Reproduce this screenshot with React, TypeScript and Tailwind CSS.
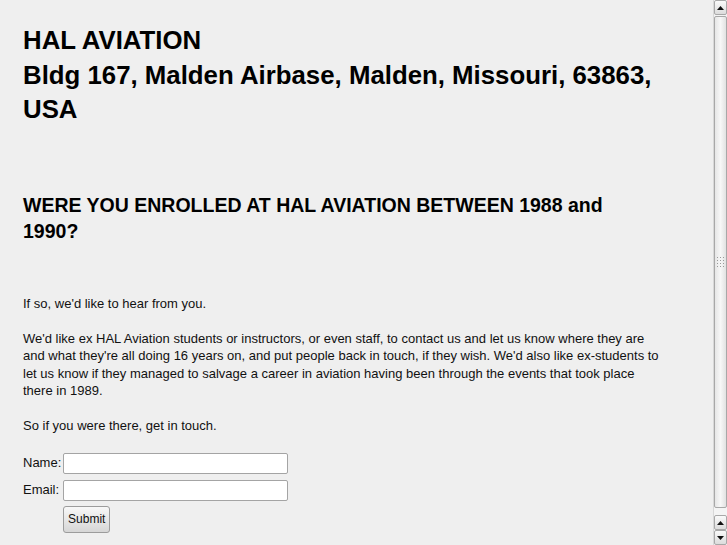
import React from 'react';

const Scrollbar: React.FC = () => {
  return (
    <div className="w-[14px] h-full flex flex-col bg-[#f4f4f4] border-l border-[#d8d8d8]">
      <div className="h-[15px] flex items-center justify-center bg-gradient-to-b from-[#fafafa] to-[#dcdcdc] border border-[#a8a8a8] rounded-[2px]">
        <svg width="7" height="4" viewBox="0 0 7 4"><path d="M0 4 L3.5 0 L7 4 Z" fill="#111" /></svg>
      </div>
      <div className="h-[492px] flex items-center justify-center bg-gradient-to-r from-[#e6e6e6] via-[#f7f7f7] to-[#e2e2e2] border border-[#a8a8a8] rounded-[2px] mt-px">
        <div className="grid grid-cols-3 gap-[2px]">
          {Array.from({ length: 12 }).map((_, i) => (
            <span key={i} className="w-px h-px bg-[#9a9a9a]" />
          ))}
        </div>
      </div>
      <div className="flex-1" />
      <div className="h-[15px] flex items-center justify-center bg-gradient-to-b from-[#fafafa] to-[#dcdcdc] border border-[#a8a8a8] rounded-[2px]">
        <svg width="7" height="4" viewBox="0 0 7 4"><path d="M0 4 L3.5 0 L7 4 Z" fill="#111" /></svg>
      </div>
      <div className="h-[15px] flex items-center justify-center bg-gradient-to-b from-[#fafafa] to-[#dcdcdc] border border-[#a8a8a8] rounded-[2px]">
        <svg width="7" height="4" viewBox="0 0 7 4"><path d="M0 0 L3.5 4 L7 0 Z" fill="#111" /></svg>
      </div>
    </div>
  );
};

const App: React.FC = () => {
  return (
    <div className="h-[545px] w-full flex overflow-hidden bg-[#efefef] text-black font-['Liberation_Sans',Arial,sans-serif]">
      <div className="flex-1 overflow-hidden">
        <div className="w-[659px] pl-[23px] pt-[23px]">
          <h1 className="text-[25.8px] leading-[34.5px] font-bold">
            HAL AVIATION
            <br />
            Bldg 167, Malden Airbase, Malden, Missouri, 63863, USA
          </h1>

          <h2 className="mt-[65px] text-[19.5px] leading-[26px] font-bold">
            WERE YOU ENROLLED AT HAL AVIATION BETWEEN 1988 and 1990?
          </h2>

          <div className="text-[13px] leading-[17.5px] text-[#111]">
            <p className="mt-[51px]">If so, we'd like to hear from you.</p>
            <p className="mt-[17.5px]">
              We'd like ex HAL Aviation students or instructors, or even staff, to contact us and let us know where they are
              and what they're all doing 16 years on, and put people back in touch, if they wish. We'd also like ex-students to
              let us know if they managed to salvage a career in aviation having been through the events that took place there in 1989.
            </p>
            <p className="mt-[17.5px]">So if you were there, get in touch.</p>
          </div>

          <form className="mt-[18px] grid grid-cols-[auto_auto] justify-start gap-x-[2px] gap-y-[6px] text-[13px] text-[#111]">
            <label className="flex items-center">Name:</label>
            <input className="w-[225px] h-[21px] bg-white border border-[#a4a4a4] rounded-[2px] outline-none" />
            <label className="flex items-center">Email:</label>
            <input className="w-[225px] h-[21px] bg-white border border-[#a4a4a4] rounded-[2px] outline-none" />
            <span />
            <div className="-mt-[1px]">
              <button
                type="button"
                className="w-[47px] h-[27px] text-[12px] rounded-[3px] border border-[#9c9c9c] bg-gradient-to-b from-[#f8f8f8] to-[#d6d6d6]"
              >
                Submit
              </button>
            </div>
          </form>
        </div>
      </div>
      <Scrollbar />
    </div>
  );
};

export default App;
